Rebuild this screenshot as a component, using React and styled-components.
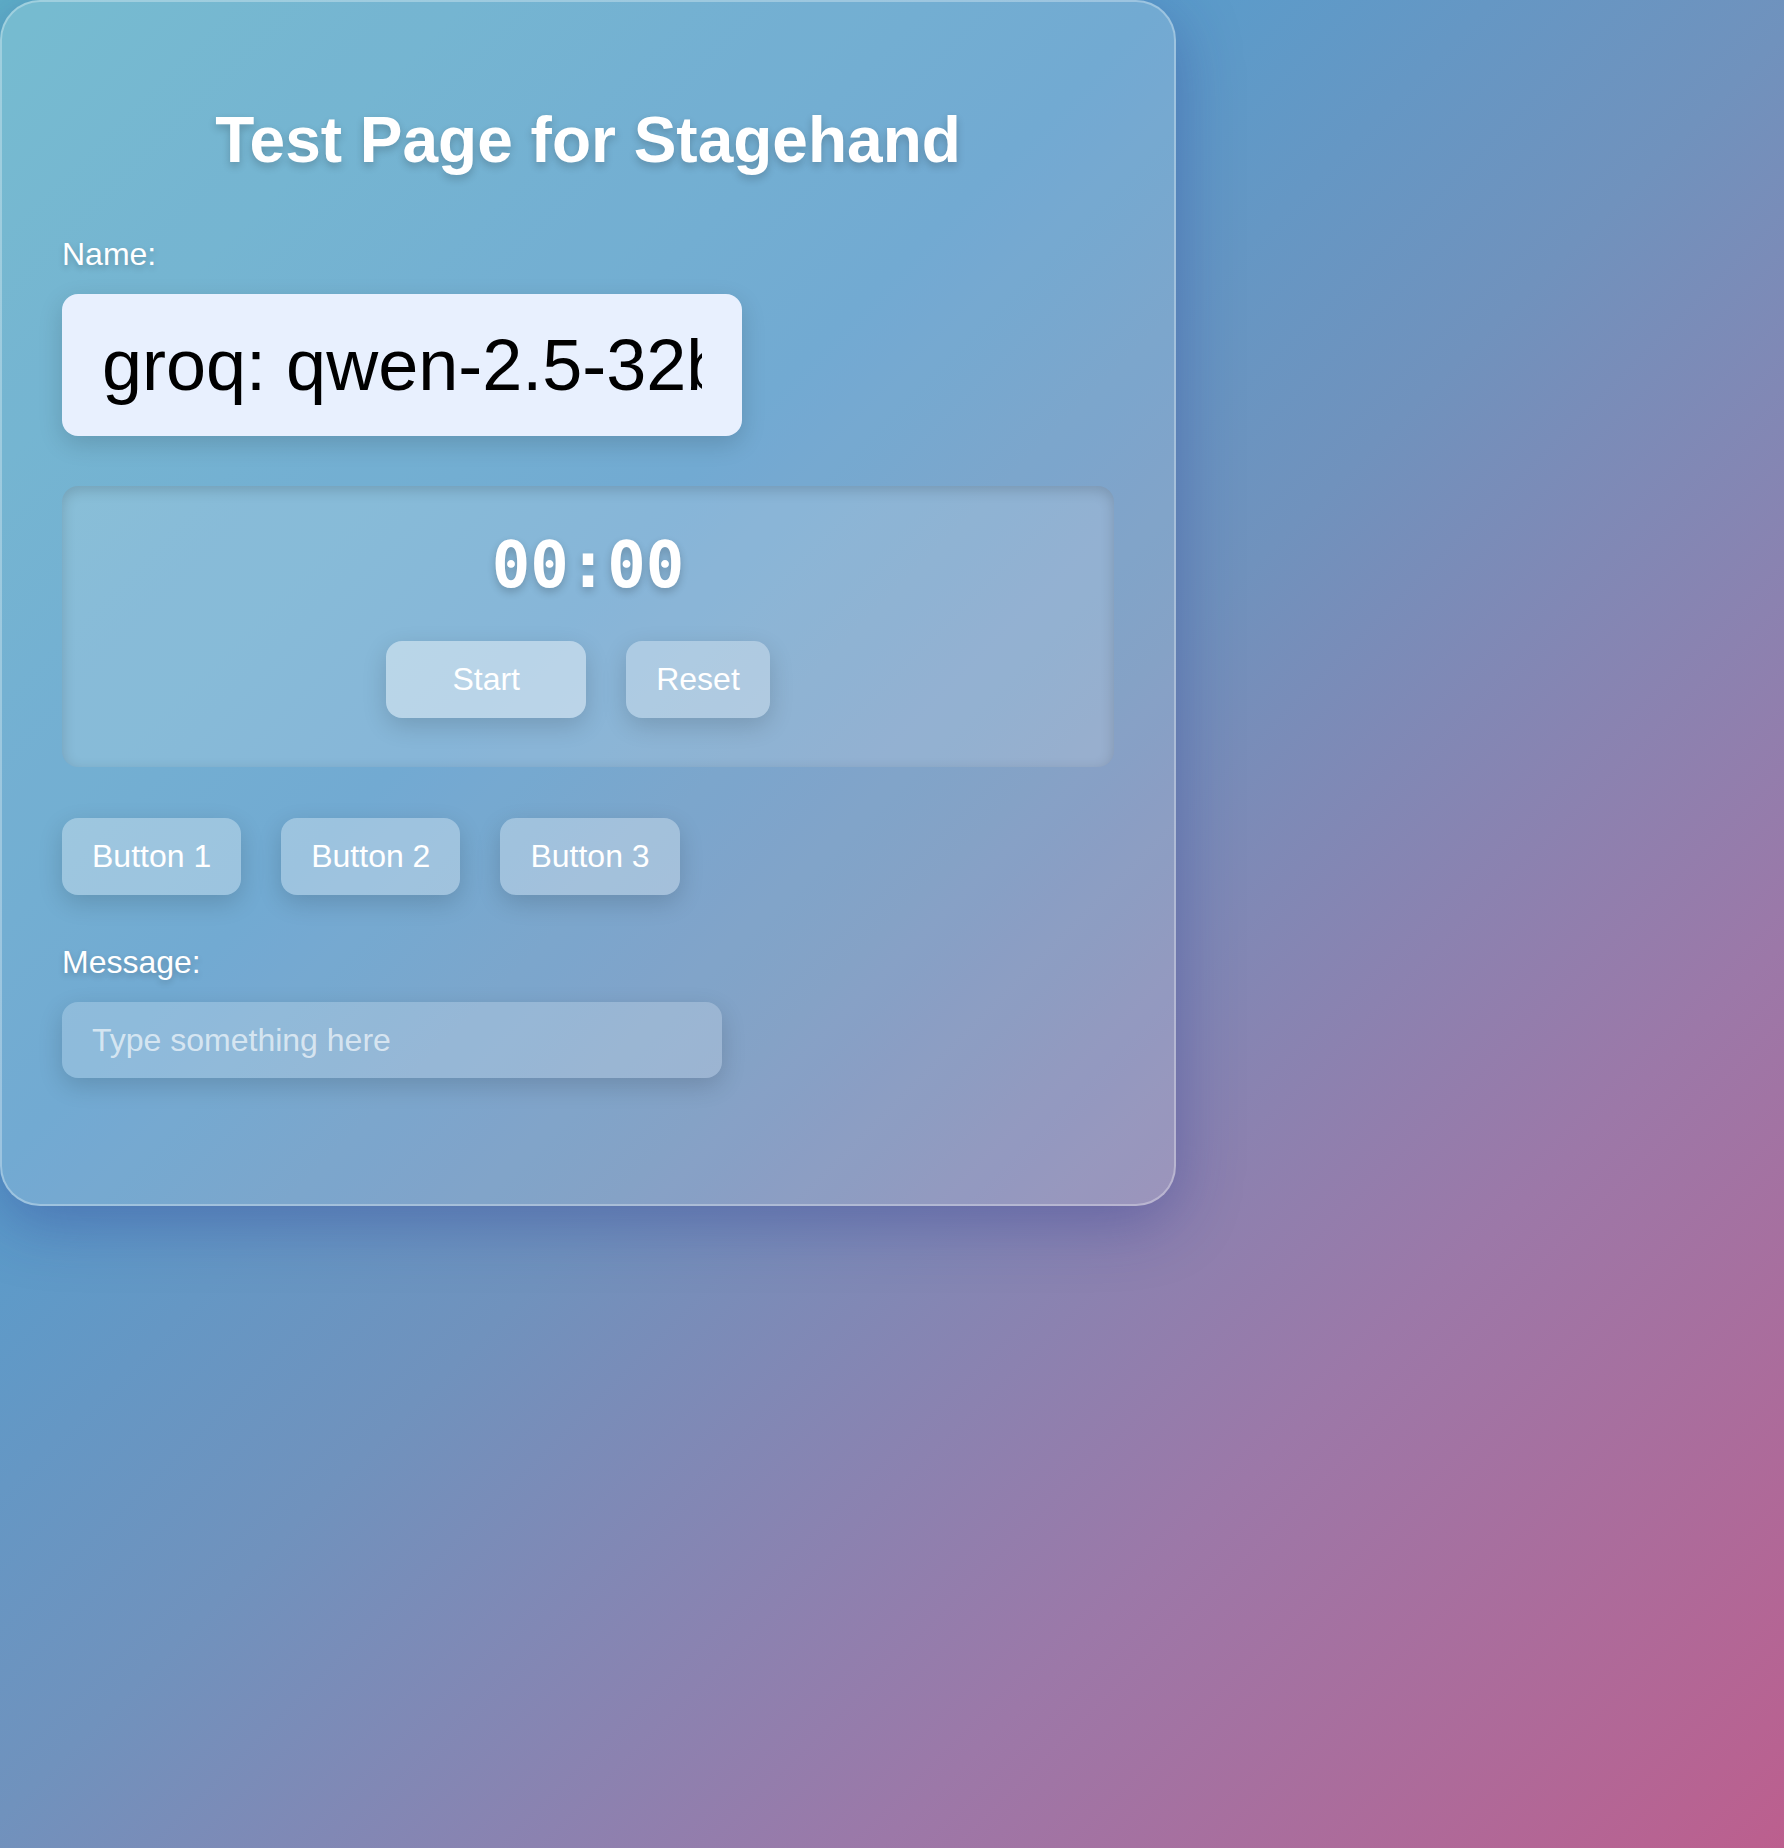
import styled, { createGlobalStyle } from "styled-components";

const GlobalStyle = createGlobalStyle`
  html, body {
    margin: 0;
    padding: 0;
  }
  body {
    min-height: 100vh;
    font-family: "Liberation Sans", Arial, sans-serif;
    background: linear-gradient(
      135deg,
      #5fb0c8 0%,
      #5a9ccb 32%,
      #7092bd 50%,
      #9c78a8 75%,
      #bc5f8e 100%
    );
  }
`;

const Card = styled.div`
  box-sizing: border-box;
  width: 1176px;
  padding: 101px 60px 126px;
  border: 2px solid rgba(255, 255, 255, 0.3);
  border-radius: 40px;
  background: rgba(255, 255, 255, 0.15);
  box-shadow: 0 16px 64px rgba(31, 38, 135, 0.34);
`;

const Title = styled.h1`
  margin: 0;
  font-size: 64px;
  line-height: 74px;
  font-weight: 700;
  color: #fff;
  text-align: center;
  text-shadow: 0 4px 8px rgba(0, 0, 0, 0.2);
`;

const Label = styled.label`
  display: block;
  margin-top: ${(p) => p.$top}px;
  font-size: 32px;
  line-height: 37px;
  color: #fff;
  text-shadow: 0 3px 6px rgba(0, 0, 0, 0.2);
`;

const NameInput = styled.input`
  display: block;
  box-sizing: border-box;
  width: 680px;
  height: 142px;
  margin-top: 21px;
  padding: 0 40px;
  border: none;
  border-radius: 16px;
  background: #e8f0fe;
  color: #000;
  font-family: "Liberation Sans", Arial, sans-serif;
  font-size: 72px;
  outline: none;
  box-shadow: 0 8px 24px rgba(0, 0, 0, 0.15);
`;

const TimerBox = styled.div`
  margin-top: 50px;
  padding: 42px 0 49px;
  border-radius: 16px;
  background: rgba(255, 255, 255, 0.15);
  box-shadow: inset 0 4px 14px rgba(0, 0, 0, 0.16);
  text-align: center;
`;

const Display = styled.div`
  font-family: "DejaVu Sans Mono", Menlo, monospace;
  font-weight: 700;
  font-size: 64px;
  line-height: 74px;
  color: #fff;
  text-shadow: 0 4px 8px rgba(0, 0, 0, 0.2);
`;

const TimerControls = styled.div`
  display: flex;
  justify-content: center;
  gap: 40px;
  margin-top: 39px;
  padding-right: 20px;
`;

const Row = styled.div`
  display: flex;
  gap: 40px;
  margin-top: 51px;
`;

const Button = styled.button`
  box-sizing: border-box;
  min-width: ${(p) => (p.$wide ? "200px" : "0")};
  padding: 20px 30px;
  border: none;
  border-radius: 16px;
  background: rgba(255, 255, 255, ${(p) => (p.$strong ? 0.42 : 0.3)});
  color: #fff;
  font-family: "Liberation Sans", Arial, sans-serif;
  font-size: 32px;
  line-height: 37px;
  cursor: pointer;
  box-shadow: 0 8px 24px rgba(0, 0, 0, 0.15);
`;

const MessageInput = styled.input`
  display: block;
  box-sizing: border-box;
  width: 660px;
  height: 76px;
  margin-top: 21px;
  padding: 0 30px;
  border: none;
  border-radius: 16px;
  background: rgba(255, 255, 255, 0.2);
  color: #fff;
  font-family: "Liberation Sans", Arial, sans-serif;
  font-size: 32px;
  outline: none;
  box-shadow: 0 8px 24px rgba(0, 0, 0, 0.15);

  &::placeholder {
    color: rgba(255, 255, 255, 0.65);
  }
`;

const App = () => {
  return (
    <>
      <GlobalStyle />
      <Card>
        <Title>Test Page for Stagehand</Title>
        <Label $top={59} htmlFor="name">
          Name:
        </Label>
        <NameInput id="name" type="text" defaultValue="groq: qwen-2.5-32b" />
        <TimerBox>
          <Display>00:00</Display>
          <TimerControls>
            <Button $wide $strong>
              Start
            </Button>
            <Button>Reset</Button>
          </TimerControls>
        </TimerBox>
        <Row>
          <Button>Button 1</Button>
          <Button>Button 2</Button>
          <Button>Button 3</Button>
        </Row>
        <Label $top={49} htmlFor="message">
          Message:
        </Label>
        <MessageInput id="message" type="text" placeholder="Type something here" />
      </Card>
    </>
  );
};

export default App;
